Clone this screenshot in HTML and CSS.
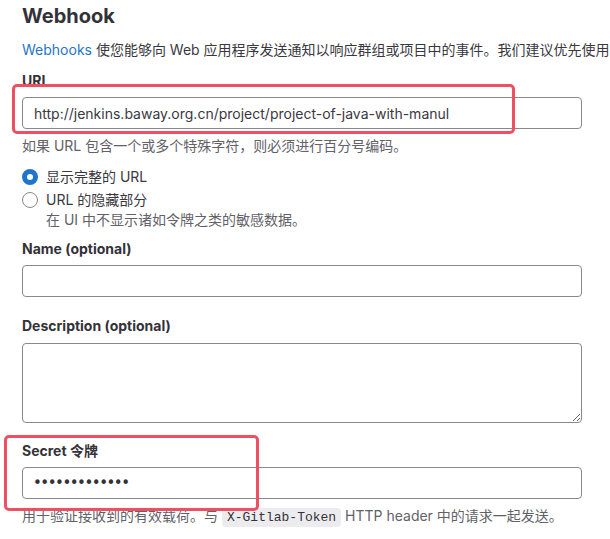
FILE: index.html
```html
<!DOCTYPE html>
<html lang="zh-CN">
<head>
<meta charset="utf-8">
<title>Webhook</title>
<link rel="stylesheet" href="styles.css">
</head>
<body>
<main class="page">
  <h2 class="title">Webhook</h2>
  <p class="intro"><a class="link" href="#">Webhooks</a> 使您能够向 Web 应用程序发送通知以响应群组或项目中的事件。我们建议优先使用</p>

  <div class="field field-url">
    <label class="label" for="url">URL</label>
    <input class="input" id="url" type="text" value="http://jenkins.baway.org.cn/project/project-of-java-with-manul">
    <p class="help">如果 URL 包含一个或多个特殊字符，则必须进行百分号编码。</p>
  </div>

  <div class="radios">
    <label class="radio">
      <span class="dot dot-on"></span>
      <span class="radio-text">显示完整的 URL</span>
    </label>
    <label class="radio">
      <span class="dot"></span>
      <span class="radio-text">URL 的隐藏部分</span>
    </label>
    <p class="help radio-help">在 UI 中不显示诸如令牌之类的敏感数据。</p>
  </div>

  <div class="field">
    <label class="label" for="name">Name (optional)</label>
    <input class="input" id="name" type="text">
  </div>

  <div class="field">
    <label class="label" for="desc">Description (optional)</label>
    <textarea class="input textarea" id="desc"></textarea>
  </div>

  <div class="field field-secret">
    <label class="label" for="secret">Secret 令牌</label>
    <input class="input secret" id="secret" type="text" value="•••••••••••••">
    <p class="help">用于验证接收到的有效载荷。与 <code class="code">X-Gitlab-Token</code> HTTP header 中的请求一起发送。</p>
  </div>
</main>
<div class="mark mark-url"></div>
<div class="mark mark-secret"></div>
</body>
</html>
```

FILE: styles.css
```css
html, body {
  margin: 0;
  padding: 0;
  background: #ffffff;
  overflow: hidden;
}

body {
  font-family: Inter, "Noto Sans CJK SC", sans-serif;
  font-size: 14px;
  line-height: 20px;
  color: #3a383f;
}

.page {
  padding: 4px 0 0 22px;
  width: 560px;
}

.title {
  margin: 0;
  font-size: 20px;
  line-height: 24px;
  font-weight: 700;
  color: #333238;
}

.intro {
  margin: 12px 0 0;
  white-space: nowrap;
}

.link {
  color: #1f75cb;
  text-decoration: none;
}

.field {
  display: flex;
  flex-direction: column;
}

.field-url {
  margin-top: 11px;
}

.label {
  font-weight: 700;
  color: #333238;
  line-height: 20px;
  margin-bottom: 6px;
}

.input {
  box-sizing: border-box;
  width: 560px;
  height: 32px;
  margin: 0;
  padding: 0 11px;
  border: 1px solid #89888d;
  border-radius: 4px;
  font-family: Inter, "Noto Sans CJK SC", sans-serif;
  font-size: 14px;
  color: #3a383f;
  background: #fff;
  outline: none;
}

.textarea {
  height: 80px;
  padding: 8px 11px;
  resize: vertical;
  margin-top: 1px;
}

.secret {
  font-family: "DejaVu Sans", sans-serif;
  font-size: 15px;
  letter-spacing: -1.5px;
  padding-left: 10px;
  color: #333238;
}

.help {
  margin: 7px 0 0;
  color: #626168;
}

.radios {
  margin-top: 11px;
  display: flex;
  flex-direction: column;
  gap: 3px;
}

.radio {
  display: flex;
  align-items: center;
  gap: 8px;
  height: 20px;
}

.dot {
  box-sizing: border-box;
  width: 16px;
  height: 16px;
  border-radius: 50%;
  border: 1px solid #89888d;
  background: #fff;
  flex: none;
}

.dot-on {
  border: 5px solid #1f75cb;
  background: #fff;
}

.radio-help {
  margin: -3px 0 0 24px;
}

.radios + .field {
  margin-top: 9px;
}

.field + .field {
  margin-top: 19px;
}

.field-secret.field {
  margin-top: 18px;
}

.code {
  font-family: "Liberation Mono", "DejaVu Sans Mono", monospace;
  font-size: 13px;
  background: #ececef;
  color: #333238;
  border-radius: 4px;
  padding: 2px 5px;
}

.mark {
  position: absolute;
  box-sizing: border-box;
  border: 3px solid #ee4f63;
  border-radius: 5px;
}

.mark-url {
  left: 12px;
  top: 84px;
  width: 503px;
  height: 50px;
}

.mark-secret {
  left: 4px;
  top: 435px;
  width: 255px;
  height: 76px;
}
```
